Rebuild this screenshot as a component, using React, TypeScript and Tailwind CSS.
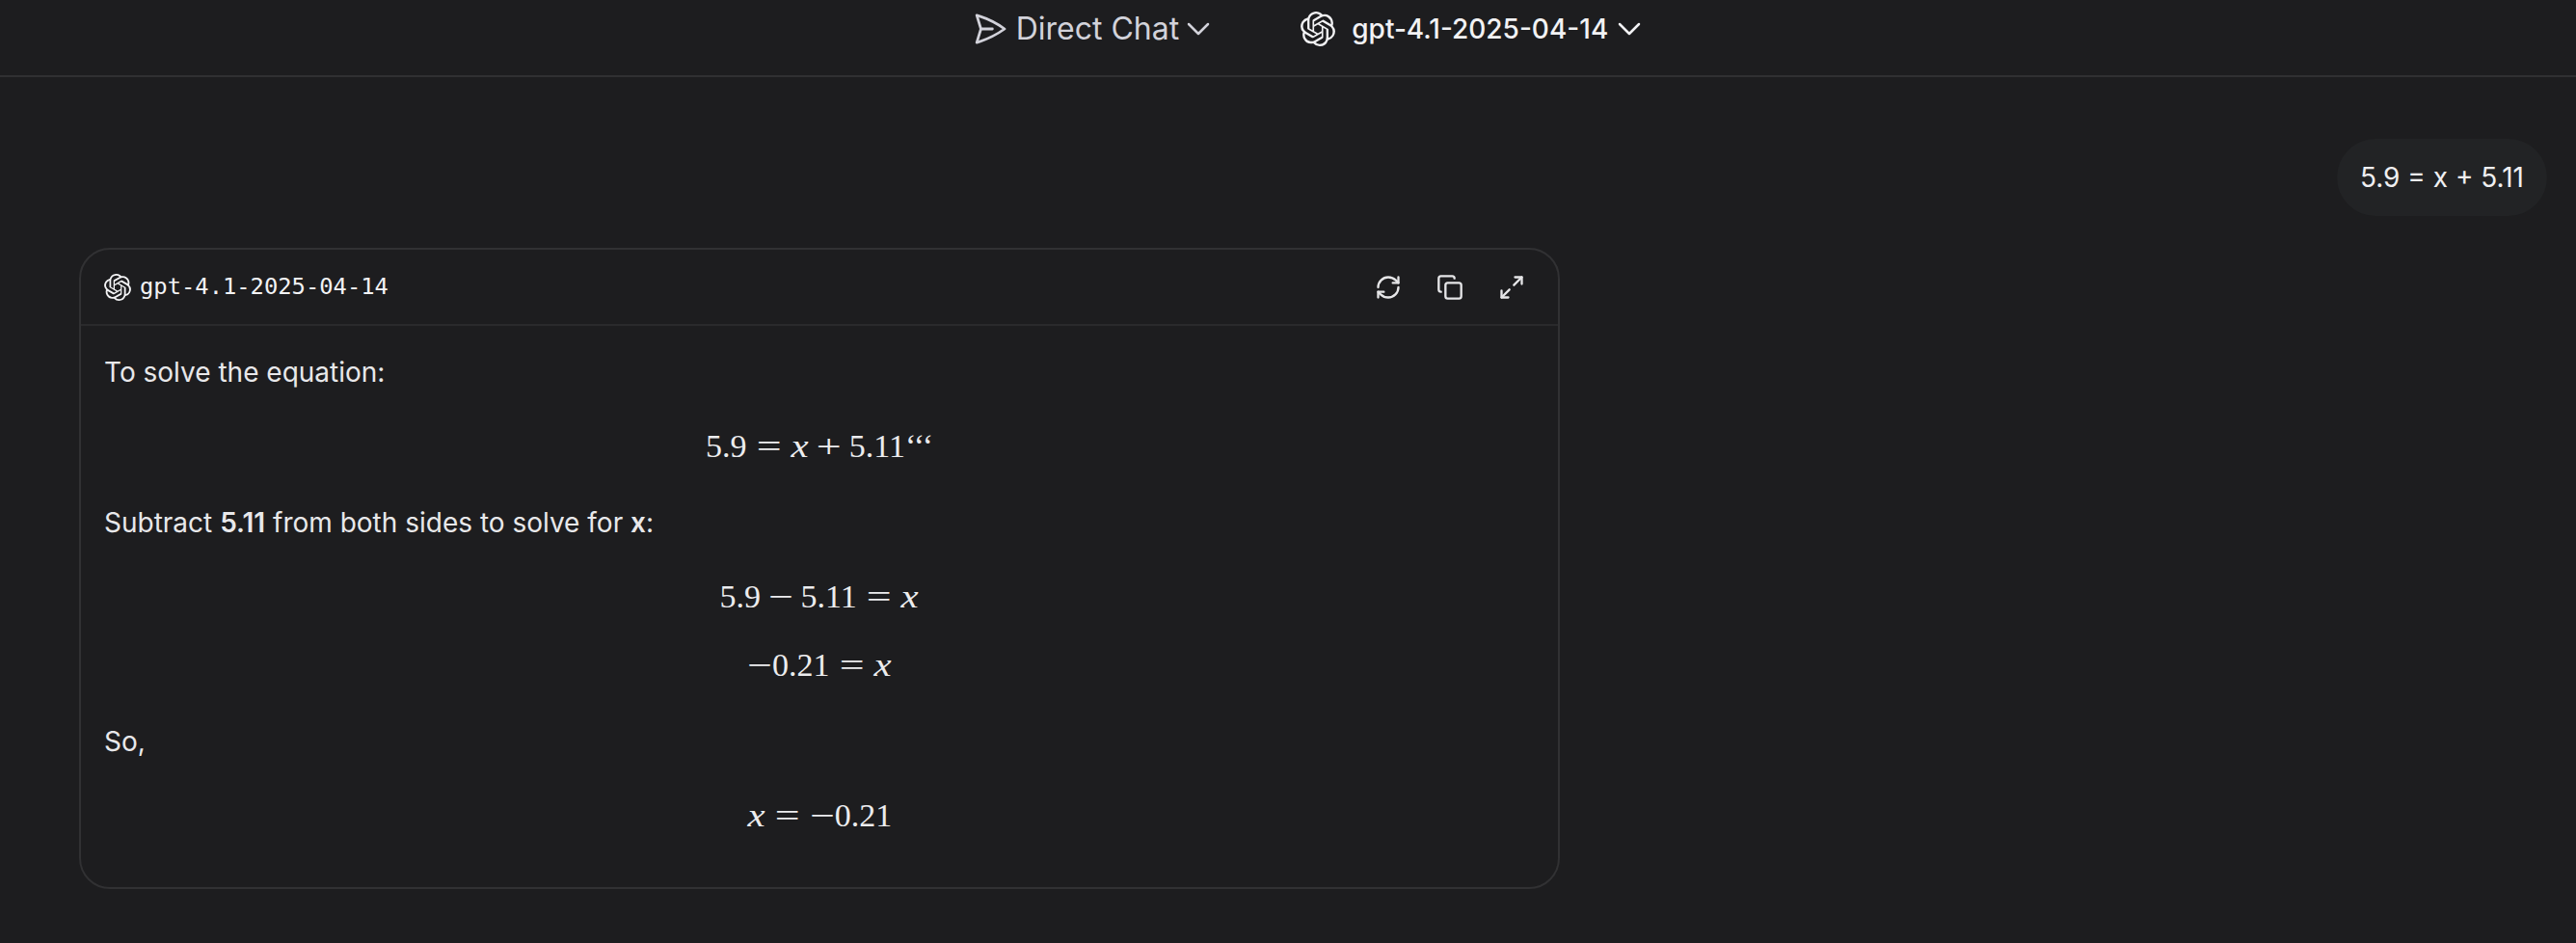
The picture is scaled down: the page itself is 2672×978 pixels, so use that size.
import { SiOpenai } from "react-icons/si";
import { HiOutlinePaperAirplane } from "react-icons/hi2";
import { ChevronDown, RefreshCw, Copy, Maximize2 } from "lucide-react";
import type { ReactNode } from "react";

function Op({ children }: { children: ReactNode }) {
  return (
    <span className="inline-block w-[0.778em] text-center mx-[0.2778em]">
      <span className="inline-block scale-x-[1.35]">{children}</span>
    </span>
  );
}

function Bin({ children }: { children: ReactNode }) {
  return (
    <span className="inline-block w-[0.778em] text-center mx-[0.2222em]">
      <span className="inline-block scale-x-[1.35]">{children}</span>
    </span>
  );
}

function X() {
  return (
    <span className="inline-block w-[0.572em] text-center italic">
      <span className="inline-block scale-x-[1.2]">x</span>
    </span>
  );
}

function Neg() {
  return (
    <span className="inline-block w-[0.778em] text-center">
      <span className="inline-block scale-x-[1.35]">−</span>
    </span>
  );
}

function MathLine({ className, children }: { className: string; children: ReactNode }) {
  return (
    <div
      className={`h-12 pt-[1px] flex items-center justify-center text-[34px] leading-[45px] text-[#ececee] whitespace-pre font-['Liberation_Serif',serif] ${className}`}
    >
      <span>{children}</span>
    </div>
  );
}

export default function App() {
  return (
    <div className="min-h-[978px] bg-[#1d1d1f] font-['Inter',sans-serif] text-[#e8e8ea]">
      <header className="h-[80px] border-b-2 border-[#303032] flex items-start justify-center pl-[46px] pt-[11px]">
        <div className="flex items-center h-[38px] text-[#d2d2da]">
          <HiOutlinePaperAirplane className="w-[38px] h-[38px] mr-[8px]" strokeWidth={1.75} />
          <span className="text-[32px] leading-[38px]">Direct Chat</span>
          <ChevronDown className="w-[40px] h-[40px]" strokeWidth={1.5} />
        </div>
        <div className="flex items-center h-[38px] ml-[86px] text-[#f2f2f4]">
          <SiOpenai className="w-[36px] h-[36px] mr-[17px]" />
          <span className="text-[28px] leading-[38px] font-medium">gpt-4.1-2025-04-14</span>
          <ChevronDown className="w-[40px] h-[40px] ml-[2px]" strokeWidth={1.5} />
        </div>
      </header>

      <main>
        <div className="flex justify-end pr-[30px] pt-[64px]">
          <div className="h-[80px] rounded-full bg-[#222325] px-[24px] flex items-center text-[28px] text-[#efeff1]">
            5.9 = x + 5.11
          </div>
        </div>

        <section className="ml-[82px] mt-[33px] w-[1536px] h-[665px] border-2 border-[#313133] rounded-[32px]">
          <div className="h-[79px] border-b-2 border-[#2a2a2c] flex items-center justify-between pl-[24px] pr-[34px]">
            <div className="flex items-center text-[#f2f2f4]">
              <SiOpenai className="w-[28px] h-[28px] mr-[9px]" />
              <span className="text-[23.8px] leading-[30px] pb-[2px] font-['DejaVu_Sans_Mono',monospace]">gpt-4.1-2025-04-14</span>
            </div>
            <div className="flex items-center gap-[36px] text-[#e6e6e8]">
              <RefreshCw className="w-[28px] h-[28px]" strokeWidth={2} />
              <Copy className="w-[28px] h-[28px]" strokeWidth={2} />
              <Maximize2 className="w-[28px] h-[28px]" strokeWidth={2} />
            </div>
          </div>

          <div className="px-[24px] text-[28px] leading-[40px]">
            <p className="pt-[28px]">To solve the equation:</p>
            <MathLine className="mt-[32px]">
              5.9<Op>=</Op><X /><Bin>+</Bin>5.11‘‘‘
            </MathLine>
            <p className="mt-[36px]">
              Subtract <strong className="font-semibold">5.11</strong> from both sides to solve for{" "}
              <strong className="font-semibold">x</strong>:
            </p>
            <MathLine className="mt-[32px]">
              5.9<Bin>−</Bin>5.11<Op>=</Op><X />
            </MathLine>
            <MathLine className="mt-[23px]">
              <Neg />0.21<Op>=</Op><X />
            </MathLine>
            <p className="mt-[36px]">So,</p>
            <MathLine className="mt-[32px]">
              <X /><Op>=</Op><Neg />0.21
            </MathLine>
          </div>
        </section>
      </main>
    </div>
  );
}
